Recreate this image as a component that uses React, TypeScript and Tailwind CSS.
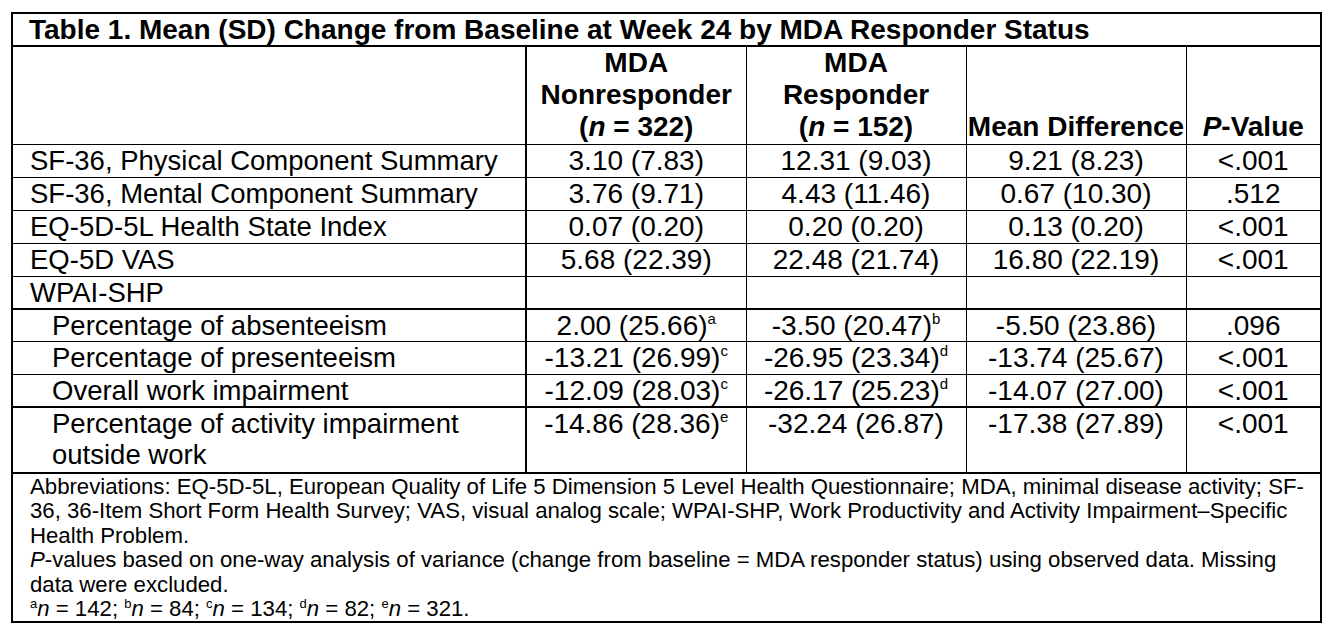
import React from 'react';

type Row = {
  label: string[];
  indent?: boolean;
  cells: [string, string?][];
  p: string;
  thick?: boolean;
};

const rows: Row[] = [
  { label: ['SF-36, Physical Component Summary'], cells: [['3.10 (7.83)'], ['12.31 (9.03)'], ['9.21 (8.23)']], p: '<.001' },
  { label: ['SF-36, Mental Component Summary'], cells: [['3.76 (9.71)'], ['4.43 (11.46)'], ['0.67 (10.30)']], p: '.512' },
  { label: ['EQ-5D-5L Health State Index'], cells: [['0.07 (0.20)'], ['0.20 (0.20)'], ['0.13 (0.20)']], p: '<.001' },
  { label: ['EQ-5D VAS'], cells: [['5.68 (22.39)'], ['22.48 (21.74)'], ['16.80 (22.19)']], p: '<.001' },
  { label: ['WPAI-SHP'], cells: [[''], [''], ['']], p: '', thick: true },
  { label: ['Percentage of absenteeism'], indent: true, cells: [['2.00 (25.66)', 'a'], ['-3.50 (20.47)', 'b'], ['-5.50 (23.86)']], p: '.096' },
  { label: ['Percentage of presenteeism'], indent: true, cells: [['-13.21 (26.99)', 'c'], ['-26.95 (23.34)', 'd'], ['-13.74 (25.67)']], p: '<.001' },
  { label: ['Overall work impairment'], indent: true, cells: [['-12.09 (28.03)', 'c'], ['-26.17 (25.23)', 'd'], ['-14.07 (27.00)']], p: '<.001', thick: true },
  { label: ['Percentage of activity impairment', 'outside work'], indent: true, cells: [['-14.86 (28.36)', 'e'], ['-32.24 (26.87)'], ['-17.38 (27.89)']], p: '<.001', thick: true },
];

const sans = "font-['Liberation_Sans',Arial,sans-serif]";

function Num({ v, sup }: { v: string; sup?: string }) {
  return (
    <span>
      {v}
      {sup && <sup className="text-[15px] leading-none -top-[11px]">{sup}</sup>}
    </span>
  );
}

function FootSup({ c }: { c: string }) {
  return <sup className="text-[13px] leading-none -top-[8px]">{c}</sup>;
}

export default function App() {
  return (
    <div className={`w-[1329px] h-[639px] bg-white pt-[12px] pl-[11px] text-black ${sans}`}>
      <table className="w-[1311px] border-collapse border-2 border-black table-fixed">
        <colgroup>
          <col className="w-[514px]" />
          <col className="w-[220px]" />
          <col className="w-[220px]" />
          <col className="w-[220px]" />
          <col />
        </colgroup>
        <tbody>
          <tr className="h-[33px]">
            <td colSpan={5} className="border-b-2 border-black pl-[16px] py-0 text-[28px] leading-[31px] font-bold align-middle whitespace-nowrap">
              Table 1. Mean (SD) Change from Baseline at Week 24 by MDA Responder Status
            </td>
          </tr>
          <tr className="h-[98px] font-bold text-[28px] leading-[32px]">
            <td className="border border-black border-r-2" />
            <td className="border border-black text-center align-top pt-0">
              MDA
              <br />
              Nonresponder
              <br />
              (<i>n</i> = 322)
            </td>
            <td className="border border-black text-center align-top pt-0">
              MDA
              <br />
              Responder
              <br />
              (<i>n</i> = 152)
            </td>
            <td className="border border-black text-center align-bottom pb-[1px] whitespace-nowrap">Mean Difference</td>
            <td className="border border-black text-center align-bottom pb-[1px]">
              <i>P</i>-Value
            </td>
          </tr>
          {rows.map((r, i) => (
            <tr
              key={i}
              className={`${r.label.length > 1 ? 'h-[66px]' : r.thick ? 'h-[32px]' : 'h-[33px]'} ${r.thick ? 'border-b-2' : 'border-b'} border-black`}
            >
              <td
                className={`border-r-2 border-black ${r.indent ? 'pl-[39px]' : 'pl-[17px]'} py-0 text-[27.5px] leading-[31px] align-top whitespace-nowrap`}
              >
                {r.label.map((l, j) => (
                  <div key={j}>{l}</div>
                ))}
              </td>
              {r.cells.map(([v, sup], j) => (
                <td key={j} className="border-r border-black py-0 text-center align-top text-[28px] leading-[31px] whitespace-nowrap">
                  <Num v={v} sup={sup} />
                </td>
              ))}
              <td className="py-0 text-center align-top text-[28px] leading-[31px]">{r.p}</td>
            </tr>
          ))}
          <tr>
            <td colSpan={5} className="pl-[17px] pr-[4px] pt-[1px] pb-0 text-[22.2px] leading-[24.4px] align-top">
              <div className="whitespace-nowrap">
                Abbreviations: EQ-5D-5L, European Quality of Life 5 Dimension 5 Level Health Questionnaire; MDA, minimal disease activity; SF-
                <br />
                36, 36-Item Short Form Health Survey; VAS, visual analog scale; WPAI-SHP, Work Productivity and Activity Impairment–Specific
                <br />
                Health Problem.
              </div>
              <div className="whitespace-nowrap">
                <i>P</i>-values based on one-way analysis of variance (change from baseline = MDA responder status) using observed data. Missing
                <br />
                data were excluded.
              </div>
              <div>
                <FootSup c="a" />
                <i>n</i> = 142; <FootSup c="b" />
                <i>n</i> = 84; <FootSup c="c" />
                <i>n</i> = 134; <FootSup c="d" />
                <i>n</i> = 82; <FootSup c="e" />
                <i>n</i> = 321.
              </div>
            </td>
          </tr>
        </tbody>
      </table>
    </div>
  );
}
